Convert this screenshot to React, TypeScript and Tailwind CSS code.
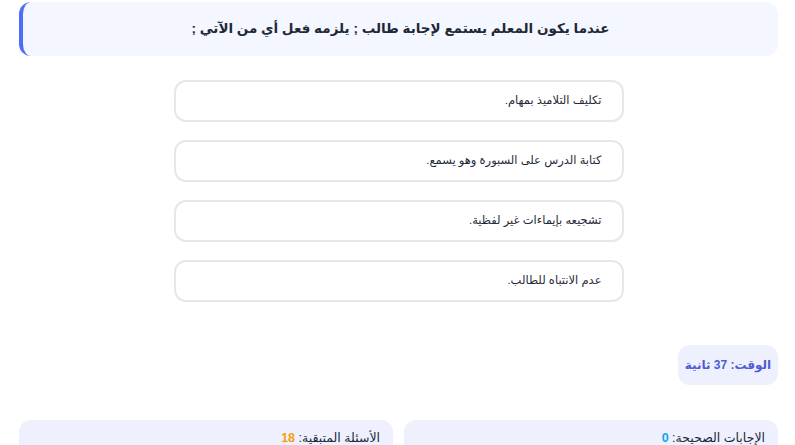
const options = [
  "تكليف التلاميذ بمهام.",
  "كتابة الدرس على السبورة وهو يسمع.",
  "تشجيعه بإيماءات غير لفظية.",
  "عدم الانتباه للطالب.",
];

export default function App() {
  return (
    <div
      dir="rtl"
      className="min-h-screen bg-white pl-[19px] pr-[17px] pt-[2px] text-gray-900"
      style={{ fontFamily: '"Liberation Sans", "DejaVu Sans", sans-serif' }}
    >
      {/* Question */}
      <div className="flex h-[54px] items-center justify-center rounded-xl border-l-4 border-[#4f6ef7] bg-[#f4f7ff] px-4">
        <h2 className="text-[13.5px] font-bold text-[#1f2937]">
          عندما يكون المعلم يستمع لإجابة طالب ; يلزمه فعل أي من الآتي ;
        </h2>
      </div>

      {/* Options */}
      <div className="mx-auto mt-[24px] flex w-[450px] flex-col gap-[18px]">
        {options.map((opt) => (
          <button
            key={opt}
            className="flex h-[42px] items-center rounded-xl border-2 border-[#e5e7eb] bg-white px-5 text-right text-[11.5px] text-[#1f2937]"
          >
            {opt}
          </button>
        ))}
      </div>

      {/* Timer */}
      <div className="mt-[43px] flex">
        <div className="flex h-[40px] w-[100px] items-center justify-center rounded-xl bg-[#eef0fe] text-[12px] font-bold text-[#4f5bd5]">
          الوقت: 37 ثانية
        </div>
      </div>

      {/* Stats */}
      <div className="mt-[35px] grid grid-cols-2 gap-[11px]">
        <div className="h-[60px] rounded-xl bg-[#eef0fe] px-[13px] pt-[9px] text-[12.5px] text-[#1f2937]">
          الإجابات الصحيحة: <span className="font-bold text-[#0ea5e9]">0</span>
        </div>
        <div className="h-[60px] rounded-xl bg-[#eef0fe] px-[13px] pt-[9px] text-[12.5px] text-[#1f2937]">
          الأسئلة المتبقية: <span className="font-bold text-[#f59e0b]">18</span>
        </div>
      </div>
    </div>
  );
}
